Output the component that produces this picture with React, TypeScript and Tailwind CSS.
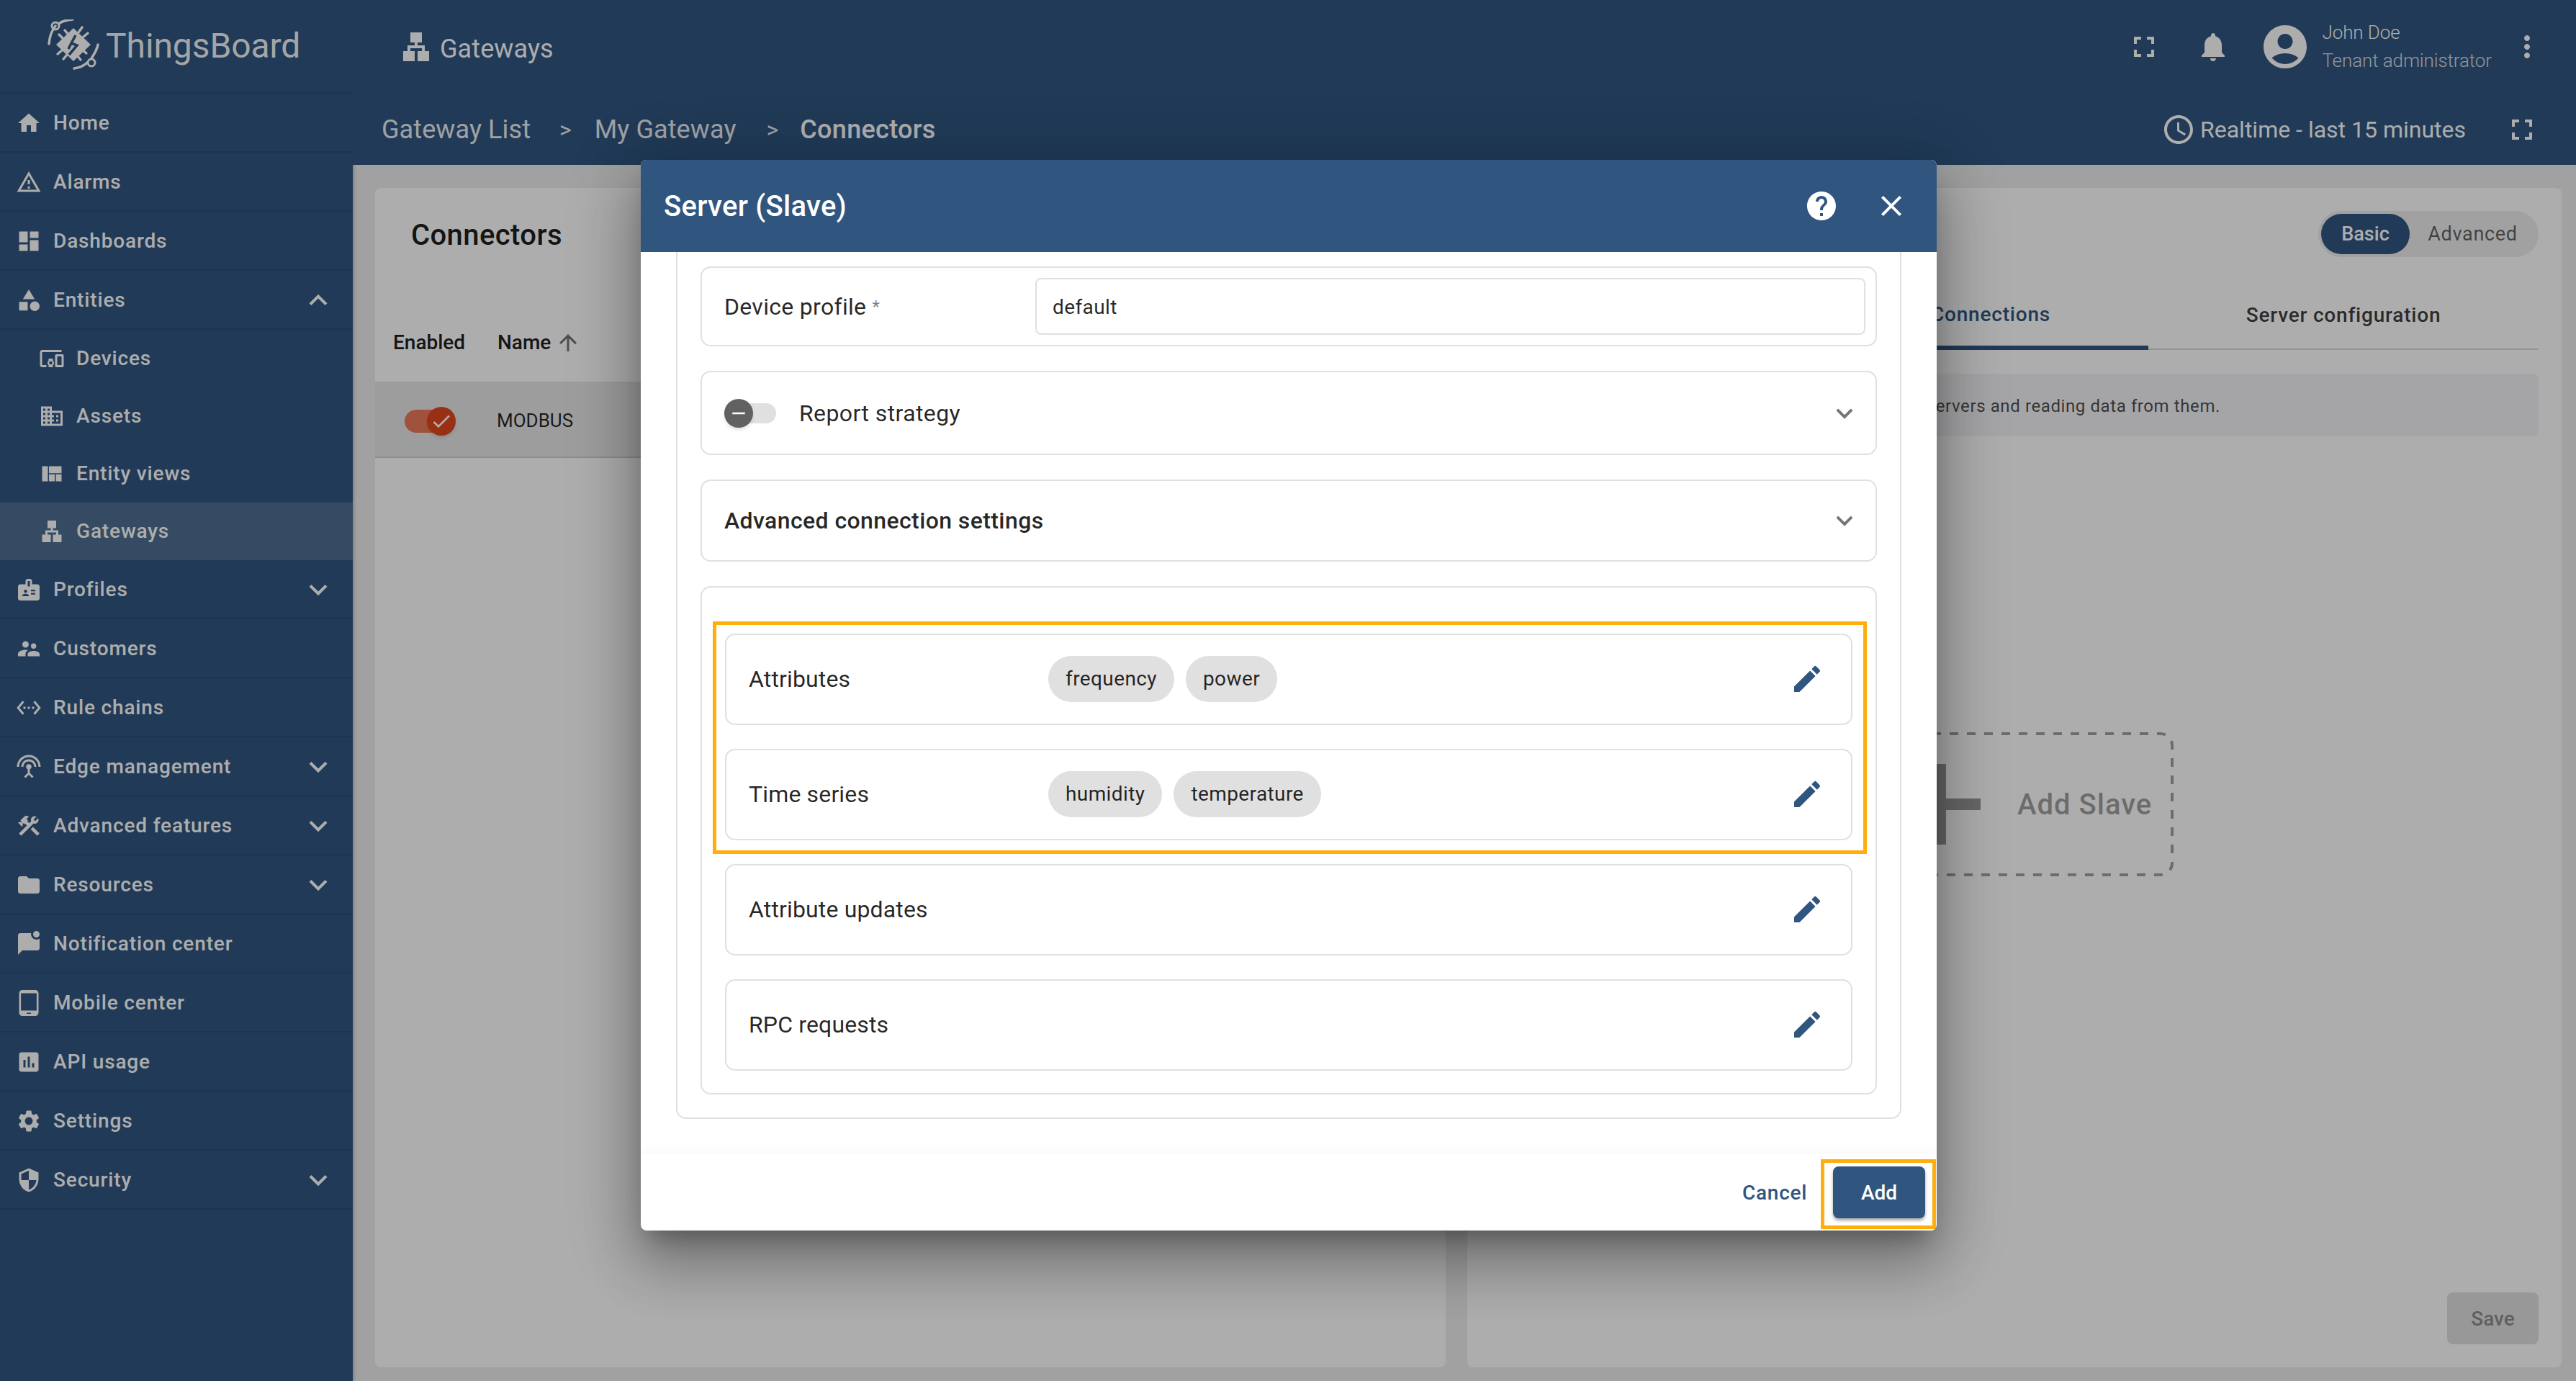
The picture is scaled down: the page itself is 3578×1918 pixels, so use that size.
import React from "react";
import {
  MdHome, MdOutlineWarningAmber, MdDashboard, MdCategory, MdOutlineDevicesOther, MdOutlineDomain, MdViewQuilt, MdLan,
  MdBadge, MdSupervisorAccount, MdSettingsEthernet, MdSettingsInputAntenna, MdConstruction, MdFolder, MdMarkChatUnread,
  MdOutlineTabletAndroid, MdAssessment, MdSettings, MdSecurity, MdExpandMore, MdExpandLess, MdFullscreen, MdNotifications,
  MdAccountCircle, MdMoreVert, MdOutlineWatchLater, MdHelp, MdClose, MdEdit, MdArrowUpward, MdCheck, MdRemove, MdAdd,
} from "react-icons/md";

type NavItem = { label: string; icon: React.ElementType; chevron?: boolean };

const topItems: NavItem[] = [
  { label: "Home", icon: MdHome },
  { label: "Alarms", icon: MdOutlineWarningAmber },
  { label: "Dashboards", icon: MdDashboard },
];

const entityItems: NavItem[] = [
  { label: "Devices", icon: MdOutlineDevicesOther },
  { label: "Assets", icon: MdOutlineDomain },
  { label: "Entity views", icon: MdViewQuilt },
  { label: "Gateways", icon: MdLan },
];

const bottomItems: NavItem[] = [
  { label: "Profiles", icon: MdBadge, chevron: true },
  { label: "Customers", icon: MdSupervisorAccount },
  { label: "Rule chains", icon: MdSettingsEthernet },
  { label: "Edge management", icon: MdSettingsInputAntenna, chevron: true },
  { label: "Advanced features", icon: MdConstruction, chevron: true },
  { label: "Resources", icon: MdFolder, chevron: true },
  { label: "Notification center", icon: MdMarkChatUnread },
  { label: "Mobile center", icon: MdOutlineTabletAndroid },
  { label: "API usage", icon: MdAssessment },
  { label: "Settings", icon: MdSettings },
  { label: "Security", icon: MdSecurity, chevron: true },
];

function Logo() {
  return (
    <svg viewBox="0 0 72 74" className="w-[72px] h-[74px] shrink-0" fill="none" stroke="white">
      <path d="M2 34 C3 22 7 14 11 9 M17 5 C21 2 26 1 35 0" strokeWidth="3.5" strokeLinecap="round" />
      <circle cx="11" cy="9" r="5" strokeWidth="3" />
      <path d="M37 68 C44 67 50 65 55 60 M61 54 C65 48 69 42 70 35" strokeWidth="3.5" strokeLinecap="round" />
      <circle cx="61" cy="60" r="5" strokeWidth="3" />
      <path d="M16 21 L22 27 M24 15 L29 21 M48 11 L43 18 M56 19 L50 24 M14 48 L20 43 M22 55 L27 49 M46 56 L41 50 M54 47 L48 42" strokeWidth="3.5" strokeLinecap="round" />
      <path d="M36 12 L60 35 L36 58 L12 35 Z" fill="white" stroke="none" />
      <path d="M39 22 L33 33 L41 36 L30 49 M33 33 L29 41" stroke="#305680" strokeWidth="3.5" />
    </svg>
  );
}

function NavRow({ item, sub, active, open }: { item: NavItem; sub?: boolean; active?: boolean; open?: boolean }) {
  const Icon = item.icon;
  return (
    <div
      className={`flex items-center text-[28px] font-medium tracking-[0.85px] text-white ${sub ? "h-[80px] pl-[54px]" : "h-[82px] pl-[22px] pt-[2px] border-b-2 border-[#2b4e75]"} ${active ? "bg-white/15" : ""}`}
    >
      <Icon className="w-[36px] h-[36px] shrink-0" />
      <span className="ml-[16px]">{item.label}</span>
      {item.chevron && <MdExpandMore className="w-[50px] h-[50px] ml-auto mr-[23px]" />}
      {open && <MdExpandLess className="w-[50px] h-[50px] ml-auto mr-[23px]" />}
    </div>
  );
}

function Sidebar() {
  return (
    <aside className="w-[490px] shrink-0 bg-[#305680] flex flex-col shadow-[2px_0_4px_rgba(0,0,0,0.2)]">
      <div className="h-[128px] flex items-center pl-[66px] border-b-2 border-[#2b4e75] box-content">
        <Logo />
        <span className="ml-[9px] text-[48px] font-normal tracking-[-0.1px] text-white/95">ThingsBoard</span>
      </div>
      {topItems.map((item) => (
        <NavRow key={item.label} item={item} />
      ))}
      <NavRow item={{ label: "Entities", icon: MdCategory }} open />
      {entityItems.map((item) => (
        <NavRow key={item.label} item={item} sub active={item.label === "Gateways"} />
      ))}
      {bottomItems.map((item) => (
        <NavRow key={item.label} item={item} />
      ))}
    </aside>
  );
}

function TopBar() {
  return (
    <header className="bg-[#305680] text-white">
      <div className="h-[130px] flex items-center pl-[64px] pr-[44px]">
        <MdLan className="w-[48px] h-[48px]" />
        <span className="ml-[9px] mt-[6px] text-[36px] tracking-[0.1px]">Gateways</span>
        <MdFullscreen className="w-[48px] h-[48px] ml-auto" />
        <MdNotifications className="w-[48px] h-[48px] ml-[48px]" />
        <MdAccountCircle className="w-[72px] h-[72px] ml-[40px]" />
        <div className="ml-[15px] flex flex-col font-light text-[26px] tracking-[-0.1px] leading-[39px]">
          <span>John Doe</span>
          <span className="opacity-80">Tenant administrator</span>
        </div>
        <MdMoreVert className="w-[48px] h-[48px] ml-[25px]" />
      </div>
      <div className="h-[99px] flex items-start pt-[25px] pl-[40px] pr-[51px] text-[36px] leading-[50px]">
        <div className="flex items-center">
          <span className="opacity-90 tracking-[0.1px]">Gateway List</span>
          <span className="ml-[40px] opacity-90 text-[32px]">&gt;</span>
          <span className="ml-[32px] opacity-90 tracking-[0.1px]">My Gateway</span>
          <span className="ml-[42px] opacity-90 text-[32px]">&gt;</span>
          <span className="ml-[30px] font-medium tracking-[0.3px]">Connectors</span>
        </div>
        <div className="ml-auto flex items-center">
          <MdOutlineWatchLater className="w-[48px] h-[48px]" />
          <span className="ml-[6px] text-[32px]">Realtime - last 15 minutes</span>
          <MdFullscreen className="w-[48px] h-[48px] ml-[54px]" />
        </div>
      </div>
    </header>
  );
}

function ConnectorsCard() {
  return (
    <section className="w-[1487px] shrink-0 bg-white rounded-[8px] flex flex-col">
      <div className="h-[269px] flex flex-col">
        <div className="pl-[50px] pt-[42px] text-[40px] leading-[48px] font-medium tracking-[0.4px] text-black/90">Connectors</div>
        <div className="mt-[105px] flex items-center h-[40px] pl-[25px] text-[28px] font-medium text-black/90">
          <span className="w-[145px]">Enabled</span>
          <span>Name</span>
          <MdArrowUpward className="w-[36px] h-[36px] ml-[6px] text-black/55" />
        </div>
      </div>
      <div className="h-[106px] bg-[#e8e8e8] border-b-2 border-black/10 flex items-center pl-[41px]">
        <div className="relative w-[70px] h-[32px] mt-[6px] rounded-full bg-[#ee7a5a]">
          <div className="absolute right-[-1px] top-[-4px] w-[40px] h-[40px] rounded-full bg-[#e0481c] text-white flex items-center justify-center shadow-md">
            <MdCheck className="w-[32px] h-[32px]" />
          </div>
        </div>
        <span className="ml-[58px] mt-[4px] text-[26px] text-black/85">MODBUS</span>
      </div>
    </section>
  );
}

function ConnectorDetails() {
  return (
    <section className="flex-1 bg-white rounded-[8px] flex flex-col px-[32px] pt-[32px] pb-[32px]">
      <div className="flex justify-end">
        <div className="w-[306px] h-[64px] rounded-full bg-[#eeeeee] p-[4px] flex items-center text-[27px] font-medium">
          <span className="w-[123px] h-[56px] rounded-full bg-[#305680] text-white flex items-center justify-center">Basic</span>
          <span className="flex-1 text-center text-black/60 font-normal tracking-[0.7px]">Advanced</span>
        </div>
      </div>
      <div className="mt-[29px] h-[100px] flex justify-end border-b-2 border-black/15 text-[28px] font-medium tracking-[0.8px]">
        <div className="w-[446px] h-[100px] pt-[8px] pl-[8px] flex items-center justify-center text-[#305680] border-b-[6px] border-[#305680]">Connections</div>
        <div className="w-[542px] h-[100px] pt-[4px] flex items-center justify-center text-black/75">Server configuration</div>
      </div>
      <div className="mt-[33px] h-[87px] pt-[2px] bg-[#f4f4f6] rounded-[8px] flex items-center justify-end pr-[442px] text-[24px] tracking-[0.6px] text-black/70">
        connecting to Modbus servers and reading data from them.
      </div>
      <div className="relative mt-[411px] ml-[505px] w-[444px] h-[200px] flex items-center">
        <svg className="absolute inset-0 w-full h-full" fill="none">
          <rect x="2" y="2" width="440" height="196" rx="16" stroke="rgba(0,0,0,0.37)" strokeWidth="4" strokeDasharray="12 12" strokeDashoffset="5" />
        </svg>
        <MdAdd className="w-[192px] h-[192px] ml-[24px] shrink-0 text-black/40" />
        <span className="ml-[11px] mt-[2px] text-[40px] font-medium tracking-[1px] whitespace-nowrap text-black/40">Add Slave</span>
      </div>
      <div className="mt-auto flex justify-end">
        <div className="w-[127px] h-[72px] pt-[2px] rounded-[8px] bg-black/12 text-black/40 text-[28px] font-medium flex items-center justify-center">Save</div>
      </div>
    </section>
  );
}

function Card({ className, children }: { className?: string; children: React.ReactNode }) {
  return <div className={`border-2 border-[#e0e0e0] rounded-[14px] ${className ?? ""}`}>{children}</div>;
}

function AttrRow({ label, chips }: { label: string; chips?: string[] }) {
  return (
    <Card className="h-[127px] flex items-center pl-[31px] pr-[37px]">
      <span className="w-[416px] mb-[2px] shrink-0 text-[32px] tracking-[0.15px] text-black/85">{label}</span>
      <div className="flex gap-[16px] mb-[2px]">
        {chips?.map((chip) => (
          <span key={chip} className="h-[64px] px-[24px] rounded-full bg-[#e0e0e0] flex items-center text-[28px] tracking-[0.4px] text-black/85">
            {chip}
          </span>
        ))}
      </div>
      <MdEdit className="ml-auto mb-[2px] w-[48px] h-[48px] text-[#305680]" />
    </Card>
  );
}

function Dialog() {
  return (
    <div className="absolute left-[890px] top-[222px] w-[1800px] h-[1487px] bg-white rounded-[8px] flex flex-col overflow-hidden font-normal shadow-[0_22px_30px_-14px_rgba(0,0,0,0.3),0_48px_76px_6px_rgba(0,0,0,0.2),0_18px_92px_16px_rgba(0,0,0,0.18)]">
      <div className="h-[128px] shrink-0 bg-[#305680] text-white flex items-center pl-[32px] pr-[39px]">
        <span className="text-[40px] mt-[2px] font-medium tracking-[0.3px]">Server (Slave)</span>
        <MdHelp className="ml-auto w-[48px] h-[48px]" />
        <MdClose className="ml-[49px] w-[48px] h-[48px]" />
      </div>
      <div className="flex-1 px-[49px] pb-[49px]">
        <div className="h-[1204px] border-2 border-t-0 border-[#e0e0e0] rounded-b-[14px] px-[32px] pt-[20px] flex flex-col gap-[34px]">
          <Card className="h-[111px] flex items-center pl-[31px] pr-[14px]">
            <span className="w-[432px] shrink-0 text-[32px] tracking-[0.3px] text-black/85">
              Device profile <span className="relative top-[-3px] text-[24px] text-black/50">*</span>
            </span>
            <div className="flex-1 h-[79px] pt-[2px] border-2 border-[#e0e0e0] rounded-[8px] flex items-center pl-[22px] text-[28px] tracking-[0.4px] text-black/85">default</div>
          </Card>
          <Card className="h-[117px] flex items-center pl-[31px] pr-[20px]">
            <div className="relative w-[72px] h-[28px] rounded-full bg-[#e0e0e0]">
              <div className="absolute left-0 top-[-6px] w-[40px] h-[40px] rounded-full bg-[#616161] text-white flex items-center justify-center shadow-md">
                <MdRemove className="w-[30px] h-[30px]" />
              </div>
            </div>
            <span className="ml-[32px] text-[32px] tracking-[0.4px] text-black/85">Report strategy</span>
            <MdExpandMore className="ml-auto w-[46px] h-[46px] text-[#757575]" />
          </Card>
          <Card className="h-[114px] flex items-center pl-[31px] pr-[20px]">
            <span className="text-[32px] font-medium tracking-[0.4px] text-black/85">Advanced connection settings</span>
            <MdExpandMore className="ml-auto w-[46px] h-[46px] text-[#757575]" />
          </Card>
          <Card className="h-[706px] px-[32px] pt-[64px] flex flex-col gap-[33px]">
            <AttrRow label="Attributes" chips={["frequency", "power"]} />
            <AttrRow label="Time series" chips={["humidity", "temperature"]} />
            <AttrRow label="Attribute updates" />
            <AttrRow label="RPC requests" />
          </Card>
        </div>
      </div>
      <div className="h-[106px] shrink-0 flex items-center justify-end pr-[16px] shadow-[0_-8px_16px_rgba(0,0,0,0.025)] text-[28px] font-medium">
        <span className="text-[#305680] mt-[2px] tracking-[0.7px]">Cancel</span>
        <div className="ml-[36px] w-[128px] h-[72px] pt-[2px] rounded-[8px] bg-[#305680] text-white flex items-center justify-center shadow-[0_3px_4px_rgba(0,0,0,0.35)]">Add</div>
      </div>
      {/* annotation frames from the screenshot */}
      <div className="absolute left-[100px] top-[641px] w-[1603px] h-[323px] border-[5px] border-[#ffae0e]" />
      <div className="absolute left-[1639px] top-[1388px] w-[160px] h-[97px] border-[5px] border-[#ffae0e]" />
    </div>
  );
}

export default function App() {
  return (
    <div className="relative w-[3578px] h-[1918px] overflow-hidden flex font-[family-name:Roboto,sans-serif] bg-[#eeeeee]">
      <Sidebar />
      <main className="flex-1 flex flex-col min-w-0">
        <TopBar />
        <div className="flex-1 flex gap-[30px] pl-[31px] pr-[20px] pt-[32px] pb-[19px] min-h-0">
          <ConnectorsCard />
          <ConnectorDetails />
        </div>
      </main>
      <div className="absolute inset-0 bg-black/32" />
      <Dialog />
    </div>
  );
}
